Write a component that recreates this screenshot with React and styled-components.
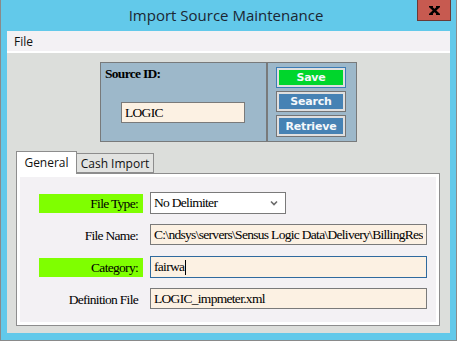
import React from 'react';
import styled, { createGlobalStyle } from 'styled-components';

const GlobalStyle = createGlobalStyle`
  html, body {
    margin: 0;
    padding: 0;
    background: #62c9ea;
  }
  * {
    box-sizing: border-box;
  }
`

const Window = styled.div`
  width: 457px;
  height: 341px;
  background: #62c9ea;
  border: 1px solid #8a8a8a;
  border-top: none;
  display: flex;
  flex-direction: column;
`
const TitleBar = styled.div`
  height: 31px;
  display: grid;
  grid-template-columns: 1fr auto 1fr;
  align-items: start;
  padding-right: 5px;
`
const Title = styled.div`
  grid-column: 2;
  padding-top: 5px;
  font-family: "Open Sans", "Noto Sans", sans-serif;
  font-size: 15px;
  color: #1b2633;
  white-space: nowrap;
`
const CloseButton = styled.div`
  grid-column: 3;
  justify-self: end;
  width: 34px;
  height: 21px;
  background: #c75a50;
  border: 1px solid #6a3a36;
  border-top: none;
  display: flex;
  align-items: center;
  justify-content: center;
`
const Client = styled.div`
  flex: 1;
  margin: 0 6px 7px 6px;
  display: flex;
  flex-direction: column;
`
const MenuBar = styled.div`
  height: 22px;
  background: #f3f1f4;
  border-bottom: 2px solid #ffffff;
  padding-left: 7px;
  display: flex;
  align-items: center;
  font-family: "Open Sans", "Noto Sans", sans-serif;
  font-size: 12px;
  color: #111;
`
const Content = styled.div`
  flex: 1;
  background: #dcdedb;
  display: flex;
  flex-direction: column;
  padding: 9px 10px 7px 9px;
`
const SourceRow = styled.div`
  display: flex;
  justify-content: center;
  margin-left: 1px;
`
const SourcePanel = styled.div`
  width: ${p => p.$w}px;
  height: 80px;
  background: #9db8ca;
  border: 1px solid #787a7b;
  display: flex;
  flex-direction: column;
  & + & {
    border-left-width: 2px;
  }
`
const IdPanel = styled(SourcePanel)`
  padding: 3px 4px;
  border-right: none;
`
const ButtonPanel = styled(SourcePanel)`
  padding: 4px 0 0 8px;
  gap: 3px;
`
const SerifLabel = styled.div`
  font-family: "Liberation Serif", "Times New Roman", serif;
  font-size: 13.5px;
  letter-spacing: -0.7px;
  font-weight: ${p => (p.$bold ? 'bold' : 'normal')};
  color: #000;
`
const TextBox = styled.input`
  width: ${p => p.$w || 277}px;
  height: ${p => p.$h || 21}px;
  margin: 0;
  padding: 0 3px;
  background: ${p => p.$bg || '#fcf1e3'};
  border: 1px solid ${p => p.$border || '#7a7a7a'};
  border-radius: 0;
  outline: none;
  font-family: "Liberation Serif", "Times New Roman", serif;
  font-size: 13.5px;
  letter-spacing: -0.7px;
  color: #000;
`
const IdBox = styled(TextBox)`
  margin: 20px 0 0 16px;
`
const ActionButton = styled.div`
  width: 70px;
  height: ${p => p.$h || 21}px;
  border: 1px solid ${p => (p.$focus ? '#3b7cb6' : '#747474')};
  background: #dfdfdf;
  padding: 2px;
  display: flex;
`
const ButtonFace = styled.div`
  flex: 1;
  background: ${p => p.$color};
  color: #f4f8fb;
  font-family: "DejaVu Sans", Verdana, sans-serif;
  font-weight: bold;
  font-size: 11px;
  letter-spacing: -0.2px;
  display: flex;
  align-items: center;
  justify-content: center;
`
const TabStrip = styled.div`
  margin-top: 9px;
  display: flex;
  align-items: flex-end;
  position: relative;
  z-index: 1;
`
const Tab = styled.div`
  width: ${p => p.$w}px;
  height: ${p => (p.$active ? 23 : 20)}px;
  margin-bottom: ${p => (p.$active ? -1 : 0)}px;
  background: ${p => (p.$active ? '#ffffff' : '#e2e3e1')};
  border: 1px solid #8d8d8d;
  border-bottom: ${p => (p.$active ? 'none' : '1px solid #8d8d8d')};
  margin-left: ${p => (p.$active ? 0 : -1)}px;
  display: flex;
  align-items: center;
  justify-content: center;
  padding-bottom: ${p => (p.$active ? 2 : 0)}px;
  font-family: "Open Sans", "Noto Sans", sans-serif;
  font-size: 12px;
  color: #111;
`
const TabPanel = styled.div`
  flex: 1;
  border: 1px solid #8d8d8d;
  background: #ffffff;
  padding: 3px;
  display: flex;
`
const TabBody = styled.div`
  flex: 1;
  background: #f3f1f4;
  padding: 15px 0 0 19px;
  display: grid;
  grid-template-columns: 104px 277px;
  grid-auto-rows: 22px;
  column-gap: 7px;
  row-gap: 10px;
  align-content: start;
`
const FieldLabel = styled(SerifLabel)`
  align-self: center;
  height: 19px;
  line-height: 19px;
  text-align: right;
  padding-right: 5px;
  background: ${p => (p.$required ? '#7fff00' : 'transparent')};
`
const SelectBox = styled.div`
  width: 136px;
  height: 22px;
  background: #ffffff;
  border: 1px solid #7a7a7a;
  display: flex;
  align-items: center;
  justify-content: space-between;
  padding: 0 7px 0 3px;
`
const FocusBox = styled.div`
  width: 277px;
  height: 22px;
  background: #fcf1e3;
  border: 1px solid #2f6a9e;
  padding: 0 3px;
  display: flex;
  align-items: center;
`
const Caret = styled.span`
  display: inline-block;
  width: 1px;
  height: 15px;
  background: #000;
  margin-left: 1px;
`

function CloseIcon() {
  return (
    <svg width="11" height="9" viewBox="0 0 11 9">
      <path d="M1.5 0.8 L9.5 8.2 M9.5 0.8 L1.5 8.2" stroke="#000" strokeWidth="2.4" />
      <path d="M0 0.8 H4 M7 0.8 H11 M0 8.2 H4 M7 8.2 H11" stroke="#000" strokeWidth="1.4" />
    </svg>
  )
}

function ChevronDown() {
  return (
    <svg width="8" height="6" viewBox="0 0 8 6">
      <path d="M1 1.5 L4 4.5 L7 1.5" fill="none" stroke="#6b6b6b" strokeWidth="1.6" />
    </svg>
  )
}

function App() {
  return (
    <>
      <GlobalStyle />
      <Window>
        <TitleBar>
          <Title>Import Source Maintenance</Title>
          <CloseButton><CloseIcon /></CloseButton>
        </TitleBar>
        <Client>
          <MenuBar>File</MenuBar>
          <Content>
            <SourceRow>
              <IdPanel $w={166}>
                <SerifLabel $bold>Source ID:</SerifLabel>
                <IdBox $w={124} readOnly value="LOGIC" />
              </IdPanel>
              <ButtonPanel $w={91}>
                <ActionButton $focus><ButtonFace $color="#00d62c">Save</ButtonFace></ActionButton>
                <ActionButton><ButtonFace $color="#4682b4">Search</ButtonFace></ActionButton>
                <ActionButton $h={22}><ButtonFace $color="#4682b4">Retrieve</ButtonFace></ActionButton>
              </ButtonPanel>
            </SourceRow>
            <TabStrip>
              <Tab $w={61} $active>General</Tab>
              <Tab $w={78}>Cash Import</Tab>
            </TabStrip>
            <TabPanel>
              <TabBody>
                <FieldLabel $required>File Type:</FieldLabel>
                <SelectBox>
                  <SerifLabel>No Delimiter</SerifLabel>
                  <ChevronDown />
                </SelectBox>
                <FieldLabel>File Name:</FieldLabel>
                <TextBox readOnly value="C:\ndsys\servers\Sensus Logic Data\Delivery\BillingResponse" />
                <FieldLabel $required>Category:</FieldLabel>
                <FocusBox>
                  <SerifLabel>fairwa</SerifLabel>
                  <Caret />
                </FocusBox>
                <FieldLabel>Definition File</FieldLabel>
                <TextBox readOnly value="LOGIC_impmeter.xml" />
              </TabBody>
            </TabPanel>
          </Content>
        </Client>
      </Window>
    </>
  )
}
export default App;
